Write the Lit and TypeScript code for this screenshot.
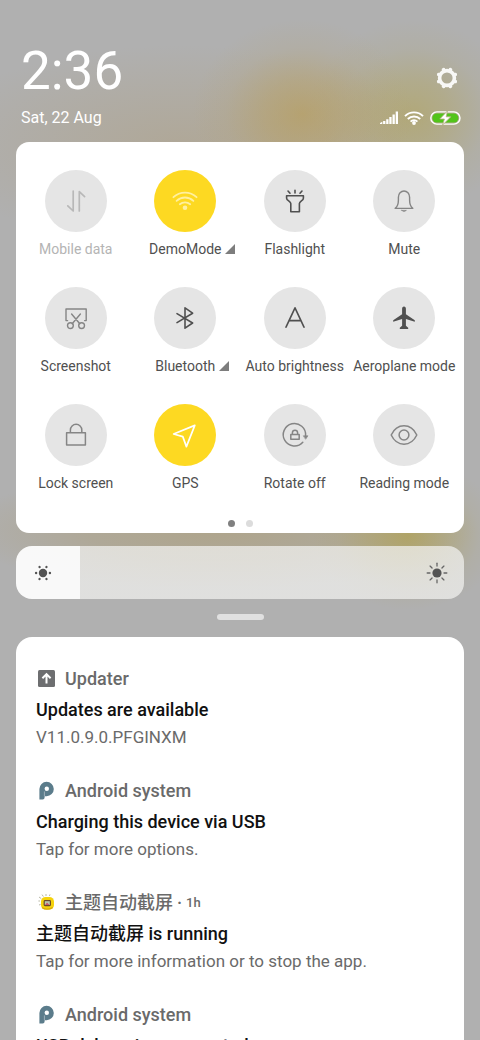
import { LitElement, html, svg, css, nothing } from "lit";
import { customElement, property, state } from "lit/decorators.js";
import { classMap } from "lit/directives/class-map.js";

const tileIcons: Record<string, unknown> = {
  data: svg`<path d="M12.2 5V25L6.8 19.8M18.3 25V5.6L23.6 10.6" stroke-width="1.7"/>`,
  wifi: svg`<g stroke-width="1.8"><path d="M3.4 11.2A17 17 0 0 1 26.6 11.2M6.6 14.8A12.4 12.4 0 0 1 23.4 14.8M9.8 18.2A8 8 0 0 1 20.2 18.2"/></g><circle cx="15" cy="21.8" r="2.3" fill="currentColor" stroke="none"/>`,
  torch: svg`<path d="M6.6 9.8H23.4V12.2C23.4 14.6 19.4 15.2 19.4 17.6V25.8H10.8V17.6C10.8 15.2 6.6 14.6 6.6 12.2ZM15 4.2V7M8 5L10 7.2M22 5L20 7.2" stroke-width="1.6"/>`,
  bell: svg`<path d="M6.2 22.4C8.8 20.4 9.4 18 9.4 14V11.2A5.6 6.2 0 0 1 20.6 11.2V14C20.6 18 21.2 20.4 23.8 22.4Z" stroke-width="1.4"/><path d="M12.6 24.4H17.4Q15 26.6 12.6 24.4Z" fill="currentColor" stroke-width="0.6"/>`,
  scissors: svg`<path d="M6.6 17.6H5V6H25.2V17.6H23.6M10.6 11L18.8 20.8M19.4 11L11.2 20.8" stroke-width="1.4"/><circle cx="9.4" cy="22.6" r="2.9" stroke-width="1.4"/><circle cx="20.6" cy="22.6" r="2.9" stroke-width="1.4"/>`,
  bluetooth: svg`<path d="M7 10.6L22.6 20L15 25.2V4.8L22.6 10.2L7 19.6" stroke-width="1.6"/>`,
  auto: svg`<path d="M6 24.2L15 4.8L24 24.2M9 17.6H21" stroke-width="1.6"/>`,
  plane: svg`<path d="M15 3.6C16.2 3.6 16.9 4.6 16.9 5.8V11.2L25.8 17.2V18.8L16.9 16V22.8L19.2 24.8V26H10.8V24.8L13.1 22.8V16L4.2 18.8V17.2L13.1 11.2V5.8C13.1 4.6 13.8 3.6 15 3.6Z" fill="currentColor" stroke="none"/>`,
  lock: svg`<path d="M5.6 12.8H24.4V25H5.6ZM9.4 12.6V10A5.7 5.7 0 0 1 20.8 10V12.6" stroke-width="1.5"/>`,
  gps: svg`<path d="M24.8 5.4L3.6 14L12.8 16.6L16.4 26.6Z" stroke-width="1.7"/>`,
  rotate: svg`<path d="M22.8 22.2A11.2 11.2 0 1 1 25.6 15.6" stroke-width="1.5"/><path d="M23.6 15.8H28L25.8 19Z" fill="currentColor" stroke-width="0.6"/><path d="M10.8 14.6H19.2V19.2H10.8ZM12.4 14.4V12.8A2.6 2.6 0 0 1 17.6 12.8V14.4" stroke-width="1.5"/>`,
  eye: svg`<path d="M2.2 15C8 2.8 22 2.8 27.8 15C22 27.2 8 27.2 2.2 15Z" stroke-width="1.5"/><circle cx="15" cy="15" r="4.9" stroke-width="1.5"/>`,
};

interface Tile {
  icon: string;
  label: string;
  tone: "strong" | "soft" | "on" | "off";
  faint?: boolean;
  more?: boolean;
}

const tiles: Tile[] = [
  { icon: "data", label: "Mobile data", tone: "off" },
  { icon: "wifi", label: "DemoMode", tone: "on", faint: true, more: true },
  { icon: "torch", label: "Flashlight", tone: "strong" },
  { icon: "bell", label: "Mute", tone: "soft" },
  { icon: "scissors", label: "Screenshot", tone: "soft" },
  { icon: "bluetooth", label: "Bluetooth", tone: "strong", more: true },
  { icon: "auto", label: "Auto brightness", tone: "strong" },
  { icon: "plane", label: "Aeroplane mode", tone: "strong" },
  { icon: "lock", label: "Lock screen", tone: "soft" },
  { icon: "gps", label: "GPS", tone: "on" },
  { icon: "rotate", label: "Rotate off", tone: "soft" },
  { icon: "eye", label: "Reading mode", tone: "soft" },
];

const appIcons: Record<string, unknown> = {
  updater: svg`<rect x="2" y="1" width="17" height="17" rx="1.5" fill="#6d6e70"/><path d="M10.5 14.6V5.4M6.4 9.2L10.5 5.1L14.6 9.2" fill="none" stroke="#fff" stroke-width="2"/>`,
  android: svg`<path d="M3.4 18.4V8A7.2 7.2 0 1 1 10.6 15.2H8.6V16.4A2 2 0 0 1 6.6 18.4Z" fill="#5b7c8b"/><path d="M8.4 15V10.4" stroke="#c9d4d9" stroke-width="0.6"/><circle cx="10.8" cy="7.8" r="2.2" fill="#fff"/>`,
  theme: svg`<g stroke="#b9b9a8" stroke-width="1" fill="none"><path d="M3 4L5 5.4M6 1.6L7.4 3.6M10 1V3M14 1.4L13.4 3M2.4 8H4M3 12L4.6 11.4"/></g><rect x="5" y="4" width="13" height="12.6" rx="4.6" fill="#f5d20c"/><path d="M6 14.4Q11 18 16.6 14.4" fill="none" stroke="#d6a60a" stroke-width="1.2"/><rect x="7.6" y="7" width="7.4" height="6.2" rx="1.4" fill="#6a4a2c"/><rect x="8.8" y="8.2" width="5" height="3.8" fill="#b7c9b2"/><path d="M9 12L11 9.6L13.6 12Z" fill="#c9566e"/>`,
};

interface Notice {
  icon: string;
  app: string;
  age?: string;
  title: string;
  body: string;
}

const notices: Notice[] = [
  { icon: "updater", app: "Updater", title: "Updates are available", body: "V11.0.9.0.PFGINXM" },
  { icon: "android", app: "Android system", title: "Charging this device via USB", body: "Tap for more options." },
  { icon: "theme", app: "主题自动截屏", age: "1h", title: "主题自动截屏 is running", body: "Tap for more information or to stop the app." },
  { icon: "android", app: "Android system", title: "USB debugging connected", body: "Tap to turn off USB debugging" },
];

@customElement("quick-tile")
class QuickTile extends LitElement {
  @property({ attribute: false }) tile!: Tile;

  static styles = css`
    :host { display: block; min-width: 0; }
    .tile {
      display: flex; flex-direction: column; align-items: center; gap: 6px;
      width: 100%; padding: 0; border: 0; background: none; cursor: pointer;
      font: 400 14px/22px Roboto, "Noto Sans", sans-serif; color: #505050;
    }
    .disc {
      display: grid; place-items: center; width: 62px; height: 62px;
      border-radius: 50%; background: #e5e5e5; color: #505050;
    }
    .glyph { width: 30px; height: 30px; fill: none; stroke: currentColor; stroke-linecap: round; stroke-linejoin: round; }
    .soft .disc { color: #858585; }
    .on .disc { background: #fdd922; color: #fff; }
    .on.faint .disc { color: #fff0a0; }
    .off { color: #b4b4b4; }
    .off .disc { color: #b8b8b8; }
    .label { position: relative; white-space: nowrap; }
    .more { position: absolute; left: 100%; top: 6px; margin-left: 4px; width: 10px; height: 10px; fill: #7d7d7d; }
  `;

  render() {
    const t = this.tile;
    return html`<button
      class=${classMap({ tile: true, [t.tone]: true, faint: !!t.faint })}
      aria-pressed=${t.tone === "on" ? "true" : "false"}
    >
      <span class="disc"><svg class="glyph" viewBox="0 0 30 30" aria-hidden="true">${tileIcons[t.icon]}</svg></span>
      <span class="label">${t.label}${t.more
        ? html`<svg class="more" viewBox="0 0 10 10" aria-hidden="true"><path d="M10 0V10H0Z" /></svg>`
        : nothing}</span>
    </button>`;
  }
}

@customElement("notice-item")
class NoticeItem extends LitElement {
  @property({ attribute: false }) notice!: Notice;

  static styles = css`
    :host { display: block; font-family: Roboto, "Noto Sans CJK SC", sans-serif; color: #6a6a6a; }
    .head { display: flex; align-items: center; height: 28px; font-size: 18px; line-height: 28px; font-weight: 500; white-space: nowrap; }
    .icon { width: 20px; height: 20px; margin-right: 9px; flex: none; }
    .age { font-size: 13px; }
    .dot { margin: 0 4px; }
    .title { margin: 0; font-size: 18px; line-height: 34px; height: 34px; font-weight: 500; color: #111; }
    .body { margin: 0; font-size: 17px; line-height: 20px; }
  `;

  render() {
    const n = this.notice;
    return html`<article>
      <div class="head">
        <svg class="icon" viewBox="0 0 20 20" aria-hidden="true">${appIcons[n.icon]}</svg>
        <span>${n.app}</span>
        ${n.age ? html`<span class="dot">·</span><span class="age">${n.age}</span>` : nothing}
      </div>
      <h2 class="title">${n.title}</h2>
      <p class="body">${n.body}</p>
    </article>`;
  }
}

@customElement("app-root")
class AppRoot extends LitElement {
  @state() private level = 14.3;

  static styles = css`
    :host {
      display: block; height: 100vh; overflow: hidden; box-sizing: border-box;
      font-family: Roboto, "Noto Sans CJK SC", sans-serif; color: #fff;
      background:
        radial-gradient(110px 95px at 63% 114px, rgba(186, 154, 72, 0.56), rgba(186, 154, 72, 0.36) 35%, rgba(186, 154, 72, 0.1) 70%, rgba(186, 154, 72, 0) 100%),
        radial-gradient(105px 95px at 86% 115px, rgba(178, 162, 76, 0.54), rgba(178, 162, 76, 0.36) 35%, rgba(178, 162, 76, 0.1) 70%, rgba(178, 162, 76, 0) 100%),
        radial-gradient(260px 100px at 38% 145px, rgba(175, 155, 115, 0.4), rgba(175, 155, 115, 0.2) 50%, rgba(175, 155, 115, 0) 100%),
        radial-gradient(95px 75px at 85% 535px, rgba(176, 158, 66, 0.62), rgba(176, 158, 66, 0.34) 40%, rgba(176, 158, 66, 0.08) 75%, rgba(176, 158, 66, 0) 100%),
        radial-gradient(260px 60px at 45% 530px, rgba(172, 150, 95, 0.45), rgba(172, 150, 95, 0.3) 50%, rgba(172, 150, 95, 0) 100%),
        #b0b0b0;
    }
    .shade { display: flex; flex-direction: column; padding: 39px 16px 0; }
    .top { display: flex; justify-content: space-between; align-items: flex-end; padding: 0 5px; }
    .time { font-size: 53px; line-height: 64px; }
    .settings { width: 24px; height: 24px; margin-bottom: 13px; padding: 0; border: 0; background: none; cursor: pointer; }
    .gear { display: block; width: 24px; height: 24px; fill: none; stroke: #f8f8f6; stroke-linecap: round; }
    .sub { display: flex; justify-content: space-between; align-items: center; height: 22px; margin: 4px 3px 13px 5px; font-size: 16px; line-height: 22px; }
    .status { display: flex; align-items: center; gap: 6px; }
    .status svg { display: block; height: 14px; }
    .signal { width: 18px; }
    .wifi { width: 20px; }
    .battery { width: 31px; }
    .panel { padding: 28px 5px 6px; border-radius: 13px; background: #fff; }
    .grid { display: grid; grid-template-columns: repeat(4, minmax(0, 1fr)); row-gap: 27px; }
    .pages { display: flex; justify-content: center; gap: 11px; margin-top: 26px; }
    .page { width: 7px; height: 7px; border-radius: 50%; background: #dcdcdc; }
    .current { background: #808080; }
    .brightness { position: relative; display: block; height: 53px; margin-top: 13px; border-radius: 16px; overflow: hidden; }
    .range {
      appearance: none; -webkit-appearance: none; display: block; width: 100%; height: 100%; margin: 0; cursor: pointer;
      background: linear-gradient(to right, rgba(255, 255, 255, 0.93) var(--level), rgba(240, 240, 238, 0.74) var(--level));
    }
    .range::-webkit-slider-thumb { appearance: none; -webkit-appearance: none; width: 1px; height: 53px; opacity: 0; }
    .sun { position: absolute; top: 15px; width: 24px; height: 24px; pointer-events: none; fill: #545454; stroke: #666; }
    .dim { left: 15px; }
    .bright { right: 15px; }
    .handle { align-self: center; width: 47px; height: 6px; margin: 15px 0 17px; border-radius: 3px; background: #e0e0e0; }
    .notices { display: flex; flex-direction: column; gap: 30px; padding: 28px 20px; border-radius: 16px 16px 0 0; background: #fff; }
  `;

  private onLevel(e: Event) {
    this.level = Number((e.target as HTMLInputElement).value);
  }

  render() {
    const teeth = [0, 1, 2, 3, 4, 5, 6, 7].map((i) => i * 45 + 22.5);
    const rays = [0, 45, 90, 135, 180, 225, 270, 315];
    const dots = [30, 90, 150, 210, 270, 330];
    return html`<main class="shade">
      <header>
        <div class="top">
          <time class="time">2:36</time>
          <button class="settings" aria-label="Settings">
            <svg class="gear" viewBox="0 0 24 24">
              <circle cx="12" cy="12" r="7.4" stroke-width="3.6" />
              ${teeth.map((a) => svg`<path d="M12 3.6V3.1" stroke-width="3.8" transform="rotate(${a} 12 12)"/>`)}
            </svg>
          </button>
        </div>
        <div class="sub">
          <span>Sat, 22 Aug</span>
          <div class="status">
            <svg class="signal" viewBox="0 0 18 14" fill="#fff" aria-hidden="true">
              <path d="M0 12L2.3 10.8V13H0ZM3.1 10H5.4V13H3.1ZM6.2 8.2H8.5V13H6.2ZM9.3 6H11.6V13H9.3ZM12.5 3.4H14.8V13H12.5ZM15.7 0.6H18V13H15.7Z" />
            </svg>
            <svg class="wifi" viewBox="0 0 20 14" fill="none" stroke="#fff" stroke-width="1.9" aria-hidden="true">
              <path d="M1 5.2A12.6 12.6 0 0 1 19 5.2M3.8 8A8.8 8.8 0 0 1 16.2 8M6.6 10.6A5 5 0 0 1 13.4 10.6" />
              <circle cx="10" cy="12" r="1.9" fill="#fff" stroke="none" />
            </svg>
            <svg class="battery" viewBox="0 0 31 14" aria-hidden="true">
              <rect x="0.8" y="0.9" width="29.2" height="12.2" rx="6.1" fill="none" stroke="#fff" stroke-width="1.4" />
              <rect x="2.4" y="2.5" width="26" height="9" rx="4.5" fill="#52c41a" />
              <path d="M17.4 0L9.8 8H14.4L12.6 14L20.8 5.8H16.2Z" fill="#fff" stroke="#b5ae84" stroke-width="0.8" />
            </svg>
          </div>
        </div>
      </header>
      <section class="panel" aria-label="Quick settings">
        <div class="grid">${tiles.map((t) => html`<quick-tile .tile=${t}></quick-tile>`)}</div>
        <div class="pages"><span class="page current"></span><span class="page"></span></div>
      </section>
      <label class="brightness">
        <input class="range" type="range" min="0" max="100" step="0.1" aria-label="Brightness"
          .value=${String(this.level)} style="--level: ${this.level}%" @input=${this.onLevel} />
        <svg class="sun dim" viewBox="0 0 24 24" aria-hidden="true">
          <circle cx="12" cy="12" r="4.2" stroke="none" />
          ${dots.map((a) => svg`<circle cx="12" cy="5.1" r="1.2" stroke="none" transform="rotate(${a} 12 12)"/>`)}
        </svg>
        <svg class="sun bright" viewBox="0 0 24 24" aria-hidden="true">
          <circle cx="12" cy="12" r="4.6" stroke="none" />
          ${rays.map((a) => svg`<path d="M12 2.2V5" stroke-width="1.3" stroke-linecap="round" transform="rotate(${a} 12 12)"/>`)}
        </svg>
      </label>
      <div class="handle"></div>
      <section class="notices" aria-label="Notifications">
        ${notices.map((n) => html`<notice-item .notice=${n}></notice-item>`)}
      </section>
    </main>`;
  }
}
